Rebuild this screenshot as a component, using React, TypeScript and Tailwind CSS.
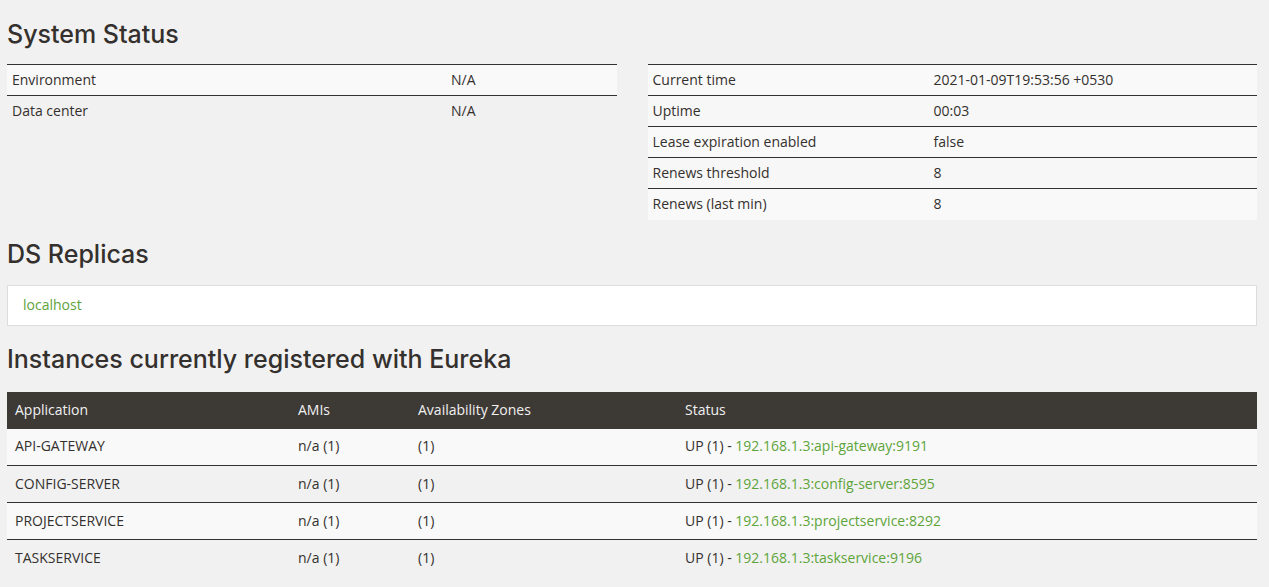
const BODY = { fontFamily: '"Open Sans", "Noto Sans", sans-serif' }
const HEAD = { fontFamily: 'Inter, "Open Sans", sans-serif' }

const general = [
  ['Environment', 'N/A'],
  ['Data center', 'N/A'],
]

const info = [
  ['Current time', '2021-01-09T19:53:56 +0530'],
  ['Uptime', '00:03'],
  ['Lease expiration enabled', 'false'],
  ['Renews threshold', '8'],
  ['Renews (last min)', '8'],
]

const instances = [
  ['API-GATEWAY', '192.168.1.3:api-gateway:9191'],
  ['CONFIG-SERVER', '192.168.1.3:config-server:8595'],
  ['PROJECTSERVICE', '192.168.1.3:projectservice:8292'],
  ['TASKSERVICE', '192.168.1.3:taskservice:9196'],
]

function Heading({ children }: { children: React.ReactNode }) {
  return (
    <h2 className="h-8 text-[25px] leading-8 font-medium text-[#34302d]" style={HEAD}>
      {children}
    </h2>
  )
}

export default function App() {
  return (
    <div className="min-h-screen bg-[#f1f1f1] pl-[7px] pr-[12px] pt-[18px] text-[14px] text-[#34302d]" style={BODY}>
      <Heading>System Status</Heading>

      <div className="mt-[14px] grid grid-cols-2 gap-[31px]">
        <table className="w-full border-collapse self-start">
          <tbody>
            {general.map(([k, v], i) => (
              <tr key={k} className={`h-[31px] border-t border-[#34302d] ${i % 2 === 0 ? 'bg-[#f9f9f9]' : ''}`}>
                <td className="w-[439px] px-[5px] pb-[2px]">{k}</td>
                <td className="px-[5px] pb-[2px]">{v}</td>
              </tr>
            ))}
          </tbody>
        </table>
        <table className="w-full border-collapse">
          <tbody>
            {info.map(([k, v], i) => (
              <tr key={k} className={`h-[31px] border-t border-[#34302d] ${i % 2 === 0 ? 'bg-[#f9f9f9]' : 'bg-[#f7f7f7]'}`}>
                <td className="w-[281px] px-[5px] pb-[2px]">{k}</td>
                <td className="px-[5px] pb-[2px]">{v}</td>
              </tr>
            ))}
          </tbody>
        </table>
      </div>

      <div className="mt-[18px]">
        <Heading>DS Replicas</Heading>
      </div>
      <div className="mt-[15px] flex h-[41px] items-center border border-[#dddddd] bg-white px-[15px] pb-[2px]">
        <a className="text-[#5ea43a]">localhost</a>
      </div>

      <div className="mt-[17px]">
        <Heading>Instances currently registered with Eureka</Heading>
      </div>
      <table className="mt-[17px] w-full border-collapse">
        <thead>
          <tr className="h-[37px] bg-[#3d3935] text-left text-[#f1f1f1]">
            <th className="w-[283px] px-2 pb-[2px] font-normal">Application</th>
            <th className="w-[120px] px-2 pb-[2px] font-normal">AMIs</th>
            <th className="w-[267px] px-2 pb-[2px] font-normal">Availability Zones</th>
            <th className="px-2 pb-[2px] font-normal">Status</th>
          </tr>
        </thead>
        <tbody>
          {instances.map(([app, url], i) => (
            <tr
              key={app}
              className={`h-[37px] ${i < instances.length - 1 ? 'border-b border-[#34302d]' : ''} ${i % 2 === 0 ? 'bg-[#f9f9f9]' : ''}`}
            >
              <td className="px-2 pb-[2px]">{app}</td>
              <td className="px-2 pb-[2px]">n/a (1)</td>
              <td className="px-2 pb-[2px]">(1)</td>
              <td className="px-2 pb-[2px]">
                UP (1) - <a className="text-[#5ea43a]">{url}</a>
              </td>
            </tr>
          ))}
        </tbody>
      </table>
    </div>
  )
}
